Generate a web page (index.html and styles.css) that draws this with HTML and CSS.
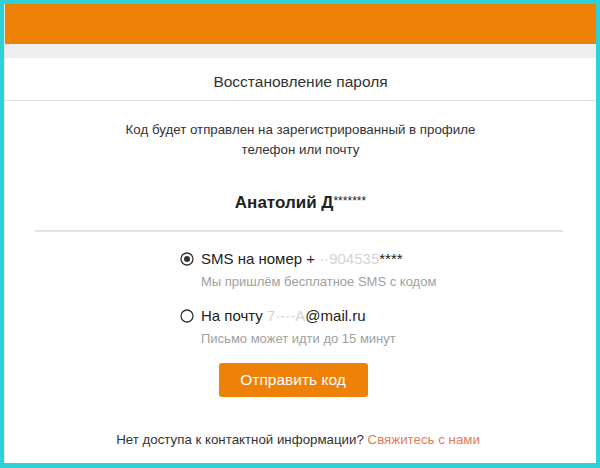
FILE: index.html
```html
<!DOCTYPE html>
<html>
<head>
<meta charset="UTF-8">
<title>Восстановление пароля</title>
	<link rel="stylesheet" href="styles.css">
</head>
<body>
	<div class="frame">
		<div class="topbar"></div>
		<div class="band"></div>
		<div class="title">Восстановление пароля</div>

		<div class="content">
			<p class="note">Код будет отправлен на зарегистрированный в профиле<br>телефон или почту</p>
			<div class="name">Анатолий Д<span class="stars">*******</span></div>
			<div class="line"></div>

			<div class="options">
				<div class="opt">
					<div class="row">
						<svg class="radio" width="14" height="14" viewBox="0 0 14 14"><circle cx="7" cy="7" r="6" fill="none" stroke="#333" stroke-width="1.3"/><circle cx="7" cy="7" r="3" fill="#333"/></svg>
						<span>SMS на номер +<span class="hid"> ··904535</span>****</span>
					</div>
					<div class="sub">Мы пришлём бесплатное SMS с кодом</div>
				</div>
				<div class="opt">
					<div class="row">
						<svg class="radio" width="14" height="14" viewBox="0 0 14 14"><circle cx="7" cy="7" r="6" fill="none" stroke="#333" stroke-width="1.3"/></svg>
						<span>На почту <span class="hid">7·-·-A</span>@mail.ru</span>
					</div>
					<div class="sub">Письмо может идти до 15 минут</div>
				</div>
			</div>

			<div class="actions"><button class="btn">Отправить код</button></div>

			<div class="foot">Нет доступа к контактной информации? <a class="link">Свяжитесь с нами</a></div>
		</div>
	</div>
</body>
</html>
```
FILE: styles.css
```css
html, body{
	margin: 0;
	padding: 0;
	height: 100%;
}
body{
	background-color: #2dd2d6;
	font-family: "Liberation Sans", Arial, sans-serif;
	color: #333;
	padding: 4px 4px 5px 4px;
	box-sizing: border-box;
}
.frame{
	background-color: #fff;
	height: 100%;
	border-left: 1px solid #e4e4e4;
	box-sizing: border-box;
}
.topbar{
	height: 40px;
	background-color: #ee8208;
}
.band{
	height: 14px;
	background-color: #eeeef1;
}
.title{
	height: 42px;
	line-height: 48px;
	text-align: center;
	font-size: 15.5px;
	color: #333;
	border-bottom: 1px solid #e2e2e2;
}
.content{
	padding-top: 19px;
}
.note{
	margin: 0;
	text-align: center;
	font-size: 13.3px;
	line-height: 20px;
	color: #333;
}
.name{
	margin-top: 33px;
	text-align: center;
	font-size: 17px;
	font-weight: bold;
	line-height: 20px;
	color: #222;
}
.stars{
	font-size: 12px;
	font-weight: normal;
	vertical-align: top;
	line-height: 16px;
}
.line{
	height: 2px;
	background-color: #e4e4e4;
	margin: 17px 33px 0 30px;
}
.options{
	padding-left: 175px;
	padding-top: 17px;
}
.opt{
	margin-bottom: 14px;
}
.row{
	display: flex;
	align-items: center;
	gap: 7px;
	font-size: 15px;
	line-height: 20px;
	color: #222;
}
.radio{
	flex: none;
}
.hid{
	color: #d4d4d4;
}
.sub{
	padding-left: 21px;
	font-size: 13px;
	line-height: 20px;
	color: #a0a0a0;
	margin-top: 3px;
}
.actions{
	display: flex;
	justify-content: center;
}
.btn{
	width: 149px;
	height: 34px;
	background-color: #ee8208;
	border: none;
	border-radius: 3px;
	color: #fff;
	font-family: "Liberation Sans", Arial, sans-serif;
	font-size: 15.5px;
	margin-left: -15px;
}
.foot{
	margin-top: 33px;
	padding-right: 5px;
	text-align: center;
	font-size: 13.3px;
	line-height: 20px;
	color: #333;
}
.link{
	color: #df7c5a;
}
```
